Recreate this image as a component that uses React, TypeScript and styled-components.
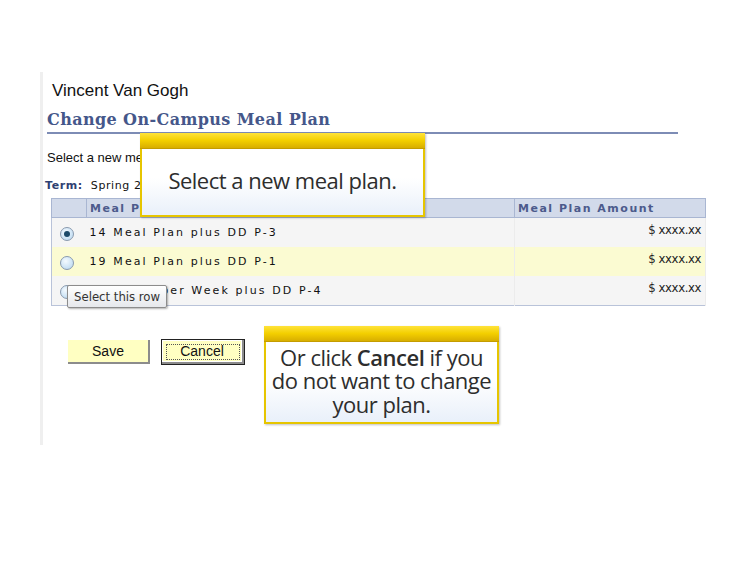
import React from "react";
import styled, { createGlobalStyle } from "styled-components";

const GlobalStyle = createGlobalStyle`
  html, body {
    margin: 0;
    padding: 0;
    background: #ffffff;
  }
`;

const ROWS = [
  { label: "14 Meal Plan plus DD P-3", amount: "$ xxxx.xx", checked: true },
  { label: "19 Meal Plan plus DD P-1", amount: "$ xxxx.xx", checked: false, hl: true },
  { label: "10 Meals per Week plus DD P-4", amount: "$ xxxx.xx", checked: false },
];

const Stage = styled.div`
  position: relative;
  width: 752px;
  height: 564px;
  padding: 72px 0 0 40px;
  box-sizing: border-box;
`;

const Panel = styled.div`
  width: 666px;
  height: 373px;
  border-left: 3px solid #efefef;
  box-sizing: border-box;
  padding: 10px 0 0 4px;
`;

const Name = styled.div`
  font-family: "Liberation Sans", Arial, sans-serif;
  font-size: 17px;
  color: #111;
  padding-left: 5px;
  line-height: 18px;
`;

const Title = styled.h1`
  margin: 10px 0 0 0;
  width: 631px;
  font-family: "DejaVu Serif", Georgia, serif;
  font-weight: bold;
  font-size: 16px;
  letter-spacing: 0.4px;
  color: #45578a;
  line-height: 20px;
  padding-bottom: 2px;
  border-bottom: 2px solid #7d8cb5;
`;

const Intro = styled.p`
  margin: 16px 0 0 0;
  font-family: "Liberation Sans", Arial, sans-serif;
  font-size: 13px;
  color: #111;
  line-height: 16px;
`;

const TermLine = styled.div`
  margin: 12px 0 0 -2px;
  font-family: "DejaVu Sans", Verdana, sans-serif;
  font-size: 11px;
  letter-spacing: 0.6px;
  color: #111;
  line-height: 15px;
  b {
    color: #2f3f72;
    margin-right: 8px;
  }
`;

const Table = styled.table`
  margin: 5px 0 0 4px;
  width: 655px;
  border-collapse: collapse;
  border: 1px solid #b9c3d9;
  font-family: "DejaVu Sans", Verdana, sans-serif;
`;

const Th = styled.th<{ $w?: number }>`
  width: ${(p) => (p.$w ? `${p.$w}px` : "auto")};
  height: 18px;
  padding: 0 3px;
  text-align: left;
  background: #d2daea;
  border: 1px solid #a9b6d2;
  font-size: 11px;
  font-weight: bold;
  letter-spacing: 1.5px;
  color: #4c5a8c;
`;

const Tr = styled.tr<{ $hl?: boolean }>`
  background: ${(p) => (p.$hl ? "#fbfbd2" : "#f5f5f5")};
`;

const Td = styled.td<{ $right?: boolean }>`
  height: 29px;
  padding: 0 3px;
  text-align: ${(p) => (p.$right ? "right" : "left")};
  border-right: 1px solid #ececec;
  font-size: 11px;
  letter-spacing: 2.1px;
  color: #111;
  vertical-align: middle;
`;

const Amount = styled.span`
  font-family: "DejaVu Sans Condensed", "DejaVu Sans", sans-serif;
  font-size: 13px;
  letter-spacing: -0.4px;
  color: #222;
  position: relative;
  top: -3px;
  right: 1px;
`;

const RadioCell = styled.td`
  height: 29px;
  text-align: center;
  vertical-align: middle;
  padding: 0 4px 0 0;
`;

const Radio = styled.span<{ $on?: boolean }>`
  display: inline-block;
  width: 12px;
  height: 12px;
  border-radius: 50%;
  border: 1px solid #8a9aae;
  background: radial-gradient(circle at 40% 35%, #f4faff 0%, #c7e0f4 70%, #a9c9e6 100%);
  position: relative;
  vertical-align: middle;
  &::after {
    content: "";
    display: ${(p) => (p.$on ? "block" : "none")};
    position: absolute;
    left: 3px;
    top: 3px;
    width: 6px;
    height: 6px;
    border-radius: 50%;
    background: #1c4a6a;
  }
`;

const Buttons = styled.div`
  display: flex;
  gap: 12px;
  margin: 34px 0 0 21px;
`;

const Button = styled.button<{ $focus?: boolean }>`
  width: 82px;
  height: 24px;
  font-family: "Liberation Sans", Arial, sans-serif;
  font-size: 14px;
  color: #111;
  background: #ffffc2;
  border: none;
  border-right: 2px solid #8c8c8c;
  border-bottom: 2px solid #8c8c8c;
  box-shadow: ${(p) => (p.$focus ? "0 0 0 1px #222, inset 0 0 0 1px #fff" : "none")};
  outline: ${(p) => (p.$focus ? "1px dotted #555" : "none")};
  outline-offset: -5px;
  padding: 0;
  line-height: 20px;
`;

const Callout = styled.div<{ $x: number; $y: number; $w: number; $h: number }>`
  position: absolute;
  left: ${(p) => p.$x}px;
  top: ${(p) => p.$y}px;
  width: ${(p) => p.$w}px;
  height: ${(p) => p.$h}px;
  box-sizing: border-box;
  border: 2px solid #e6c500;
  border-top: none;
  background: linear-gradient(180deg, #ffffff 0%, #ffffff 55%, #e9f0fa 100%);
  box-shadow: 1px 1px 2px rgba(0, 0, 0, 0.25);
  display: flex;
  flex-direction: column;
`;

const CalloutBar = styled.div`
  height: 15px;
  margin: 0 -2px;
  background: linear-gradient(180deg, #ffe33a 0%, #f3cf00 50%, #d8ae00 100%);
  border-bottom: 1px solid #c49c00;
`;

const CalloutText = styled.div`
  flex: 1;
  display: flex;
  align-items: center;
  justify-content: center;
  text-align: center;
  font-family: "Open Sans", "Noto Sans", sans-serif;
  font-size: 22px;
  letter-spacing: -0.5px;
  line-height: 23.5px;
  color: #2d2d2d;
  padding-bottom: 2px;
  white-space: nowrap;
  b {
    font-weight: 600;
  }
`;

const Tip = styled.div`
  position: absolute;
  left: 67px;
  top: 285px;
  padding: 2px 6px;
  height: 17px;
  border: 1px solid #8c8c8c;
  border-radius: 2px;
  background: linear-gradient(180deg, #ffffff 0%, #e6e8ec 100%);
  box-shadow: 1px 1px 2px rgba(0, 0, 0, 0.3);
  font-family: "DejaVu Sans Condensed", "DejaVu Sans", sans-serif;
  font-size: 13px;
  line-height: 17px;
  color: #333;
`;

export default function App() {
  return (
    <>
      <GlobalStyle />
      <Stage>
        <Panel>
          <Name>Vincent Van Gogh</Name>
          <Title>Change On-Campus Meal Plan</Title>
          <Intro>Select a new meal plan below and click Save.</Intro>
          <TermLine>
            <b>Term:</b>Spring 2011
          </TermLine>
          <Table>
            <thead>
              <tr>
                <Th $w={28} />
                <Th>Meal Plan</Th>
                <Th $w={184}>Meal Plan Amount</Th>
              </tr>
            </thead>
            <tbody>
              {ROWS.map((r) => (
                <Tr key={r.label} $hl={r.hl}>
                  <RadioCell>
                    <Radio $on={r.checked} />
                  </RadioCell>
                  <Td>{r.label}</Td>
                  <Td $right>
                    <Amount>{r.amount}</Amount>
                  </Td>
                </Tr>
              ))}
            </tbody>
          </Table>
          <Buttons>
            <Button>Save</Button>
            <Button $focus>Cancel</Button>
          </Buttons>
        </Panel>

        <Tip>Select this row</Tip>

        <Callout $x={140} $y={133} $w={285} $h={84}>
          <CalloutBar />
          <CalloutText>Select a new meal plan.</CalloutText>
        </Callout>

        <Callout $x={264} $y={326} $w={235} $h={98}>
          <CalloutBar />
          <CalloutText>
            <span>
              Or click <b>Cancel</b> if you
              <br />
              do not want to change
              <br />
              your plan.
            </span>
          </CalloutText>
        </Callout>
      </Stage>
    </>
  );
}
